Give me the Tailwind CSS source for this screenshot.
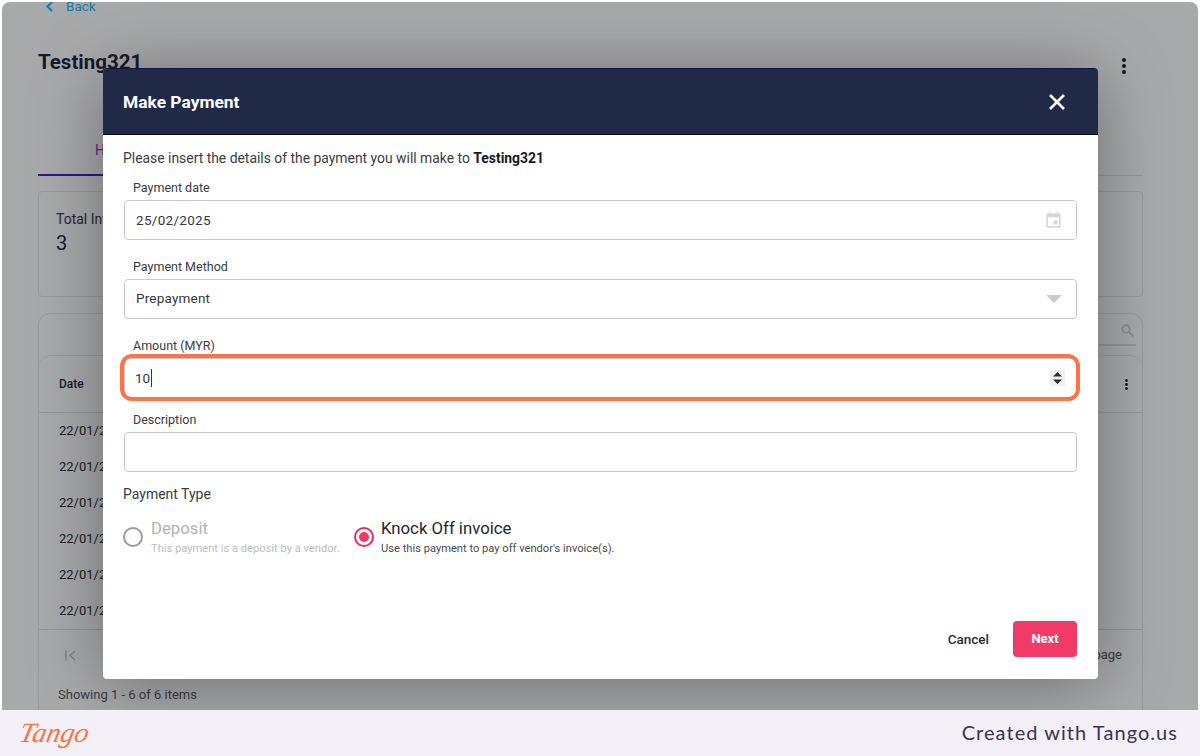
<!DOCTYPE html>
<html>
  <head>
    <title>Make Payment</title>
    <script src="https://cdn.jsdelivr.net/npm/@tailwindcss/browser@4"></script>
  </head>
  <body class="bg-white">
    <div class="h-screen flex flex-col font-['Roboto',sans-serif] bg-[#f3f1f7] overflow-hidden">
      <!-- Screenshot frame -->
      <div class="h-[710px] bg-white pt-[2px] px-[2px]">
        <div class="relative h-[708px] rounded-t-lg overflow-hidden bg-[#a8a9ab]">
          <!-- Page behind the dialog -->
          <div class="pl-[36px] pr-[55px]">
            <div class="h-[8px] flex items-center gap-[12px] pl-[7px] text-[#1b79a6] text-[13.5px]">
              <svg class="w-[9px] h-[11px]" viewBox="0 0 9 11" fill="none" stroke="#1b79a6" stroke-width="2"><path d="M7 1 2.5 5.5 7 10"/></svg>
              <span>Back</span>
            </div>
            <div class="mt-[37px] h-[30px] flex items-center justify-between">
              <div class="text-[20.500px] leading-[30px] font-bold text-[#17192b]">Testing321</div>
              <svg class="w-[4px] h-[16px] mr-[17px] mt-[8px]" viewBox="0 0 4 16" fill="#15171f"><circle cx="2" cy="2" r="2"/><circle cx="2" cy="8" r="2"/><circle cx="2" cy="14" r="2"/></svg>
            </div>
            <div class="h-[99px] flex items-end border-b border-[#949597]">
              <div class="w-[120px] h-[50px] -mb-px pl-[57px] flex items-center border-b-2 border-[#3a1287] text-[14px] text-[#5d2a93]">History</div>
            </div>
            <div class="mt-[15px] h-[106px] border border-[#999a9c] rounded pl-[17px] pt-[17px]">
              <div class="text-[14px] leading-[20px] text-[#26272b]">Total Invoices</div>
              <div class="text-[20px] leading-[26px] mt-[1px] text-[#17192b]">3</div>
            </div>
            <div class="mt-[16px] h-[400px] border border-[#999a9c] rounded-t-xl">
              <div class="h-[41px] flex justify-end items-start pr-[6px]">
                <div class="relative w-[37px] h-[32px] border-b-2 border-[#949597]">
                  <svg class="absolute top-[10px] left-[22px] w-[13px] h-[13px]" viewBox="0 0 13 13" fill="none" stroke="#8b8c8e" stroke-width="1.8"><circle cx="5" cy="5" r="3.8"/><path d="m8 8 4.4 4.4"/></svg>
                </div>
              </div>
              <div class="rounded-t-xl border-t border-[#999a9c]">
                <div class="h-[57px] flex items-center justify-between pl-[20px] pr-[14px] border-b border-[#949597]">
                  <span class="text-[12px] font-medium text-[#17192b]">Date</span>
                  <svg class="w-[3px] h-[11px]" viewBox="0 0 3 11" fill="#15171f"><circle cx="1.5" cy="1.5" r="1.4"/><circle cx="1.5" cy="5.5" r="1.4"/><circle cx="1.5" cy="9.5" r="1.4"/></svg>
                </div>
                <div class="text-[13px] text-[#1c1d24] pl-[20px] border-b border-[#949597] h-[217px] grid grid-rows-6 items-center">
                  <div>22/01/2025</div>
                  <div>22/01/2025</div>
                  <div>22/01/2025</div>
                  <div>22/01/2025</div>
                  <div>22/01/2025</div>
                  <div>22/01/2025</div>
                </div>
                <div class="h-[50px] flex items-center justify-between pl-[26px] pr-[20px]">
                  <svg class="w-[11px] h-[11px]" viewBox="0 0 11 11" fill="none" stroke="#7e7f81" stroke-width="1.4"><path d="M1 .5v10M10 1 5 5.5l5 4.5"/></svg>
                  <span class="text-[13px] text-[#38393d]">Items per page</span>
                </div>
                <div class="pl-[19px] mt-[6px] text-[13px] leading-[18px] text-[#3c3d41]">Showing 1 - 6 of 6 items</div>
              </div>
            </div>
          </div>

          <!-- Make Payment dialog -->
          <div class="absolute left-[101px] top-[66px] w-[995px] h-[611px] bg-white rounded flex flex-col shadow-[0_6px_70px_rgba(0,0,0,0.35)]">
            <div class="h-[67px] shrink-0 bg-[#202a47] rounded-t border-t border-t-[#12124a] border-b border-b-[#05070f] flex items-center justify-between pl-[20px] pr-[33px] pt-[1px]">
              <h2 class="text-[17.400px] font-bold text-white">Make Payment</h2>
              <svg class="w-[16px] h-[16px]" viewBox="0 0 16 16" fill="none" stroke="#ffffff" stroke-width="2.6"><path d="m1 1 14 14M15 1 1 15"/></svg>
            </div>
            <div class="flex-1 pl-[20px] pr-[21px] pt-[13px]">
              <p class="text-[13.900px] leading-[20px] text-[#3c3c40]">Please insert the details of the payment you will make to <b class="text-[#17181c]">Testing321</b></p>
              <div class="ml-px">
                <label class="block mt-[12px] pl-[9px] text-[12.5px] leading-[16px] text-[#3c3c40]">Payment date</label>
                <div class="mt-[4px] h-[40px] border border-[#c7c8cb] rounded flex items-center justify-between pl-[11px] pr-[13px] text-[13.5px] tracking-[0.3px] text-[#36363a]">
                  <span>25/02/2025</span>
                  <svg class="w-[19px] h-[19px]" viewBox="0 0 24 24" fill="#d3d7de"><path d="M17 12h-5v5h5v-5zM16 1v2H8V1H6v2H5c-1.11 0-1.99.9-1.99 2L3 19c0 1.1.89 2 2 2h14c1.1 0 2-.9 2-2V5c0-1.1-.9-2-2-2h-1V1h-2zm3 18H5V8h14v11z"/></svg>
                </div>

                <label class="block mt-[19px] pl-[9px] text-[12.5px] leading-[16px] text-[#3c3c40]">Payment Method</label>
                <div class="mt-[4px] h-[40px] border border-[#c7c8cb] rounded flex items-center justify-between pl-[11px] pr-[14px] text-[13.5px] tracking-[0.2px] text-[#36363a]">
                  <span class="-mt-[1px]">Prepayment</span>
                  <svg class="w-[16px] h-[8px]" viewBox="0 0 16 8" fill="#c5cad3"><path d="M0 0h16L8 8z"/></svg>
                </div>

                <label class="block mt-[19px] pl-[9px] text-[12.5px] leading-[16px] text-[#3c3c40]">Amount (MYR)</label>
                <div class="relative mt-[4px] h-[40px] border border-[#c7c8cb] rounded flex items-center justify-between pl-[10px] pr-[11px] text-[13.5px] text-[#36363a]">
                  <span class="border-r border-[#36363a] leading-[18px] pr-px">10</span>
                  <div class="w-[15px] h-[16px] bg-[#f0f0f0] flex items-center justify-center">
                    <svg class="w-[9px] h-[12px]" viewBox="0 0 9 12" fill="#2c2c30"><path d="M4.500 0 9 4.500H0zM0 7.500h9L4.500 12z"/></svg>
                  </div>
                  <div class="absolute -left-[5px] -right-[4px] -top-[5px] -bottom-[4px] border-[4px] border-[#ff7344] rounded-xl"></div>
                </div>

                <label class="block mt-[14px] pl-[9px] text-[12.5px] leading-[16px] text-[#3c3c40]">Description</label>
                <div class="mt-[4px] h-[40px] border border-[#c7c8cb] rounded"></div>
              </div>

              <div class="mt-[12px] text-[14px] leading-[20px] text-[#3c3c40]">Payment Type</div>
              <div class="mt-[13px] flex">
                <div class="flex w-[231px]">
                  <svg class="w-[20px] h-[20px] mt-[10px] shrink-0" viewBox="0 0 20 20" fill="none" stroke="#9a9a9a" stroke-width="2"><circle cx="10" cy="10" r="9"/></svg>
                  <div class="ml-[8px]">
                    <div class="text-[16.750px] leading-[22px] text-[#b3b3b3]">Deposit</div>
                    <div class="mt-[2px] text-[11.150px] leading-[16px] text-[#bcbcbc]">This payment is a deposit by a vendor.</div>
                  </div>
                </div>
                <div class="flex">
                  <svg class="w-[20px] h-[20px] mt-[10px] shrink-0" viewBox="0 0 20 20"><circle cx="10" cy="10" r="9" fill="none" stroke="#f0285f" stroke-width="2"/><circle cx="10" cy="10" r="5" fill="#ee3a68"/></svg>
                  <div class="ml-[7px]">
                    <div class="text-[16.750px] leading-[22px] text-[#26262a]">Knock Off invoice</div>
                    <div class="mt-[2px] text-[11.150px] leading-[16px] text-[#4b4b4f]">Use this payment to pay off vendor's invoice(s).</div>
                  </div>
                </div>
              </div>
            </div>
            <div class="shrink-0 flex items-center justify-end gap-[24px] pr-[21px] pb-[22px]">
              <button class="text-[13.500px] font-medium text-[#2a2a2e]">Cancel</button>
              <button class="w-[64px] h-[36px] rounded bg-[#f03a68] text-white text-[13px] font-bold">Next</button>
            </div>
          </div>
        </div>
      </div>

      <!-- Tango footer -->
      <div class="flex-1 flex items-center justify-between pl-[20px] pr-[22px] bg-[#f3f1f7]">
        <span class="font-['Liberation_Serif',serif] italic text-[28px] leading-none text-[#ff7344] -skew-x-12">Tango</span>
        <span class="font-['Lato',sans-serif] text-[20px] tracking-[1.05px] text-[#3d3155] -mt-[2px]">Created with Tango.us</span>
      </div>
    </div>
  </body>
</html>
